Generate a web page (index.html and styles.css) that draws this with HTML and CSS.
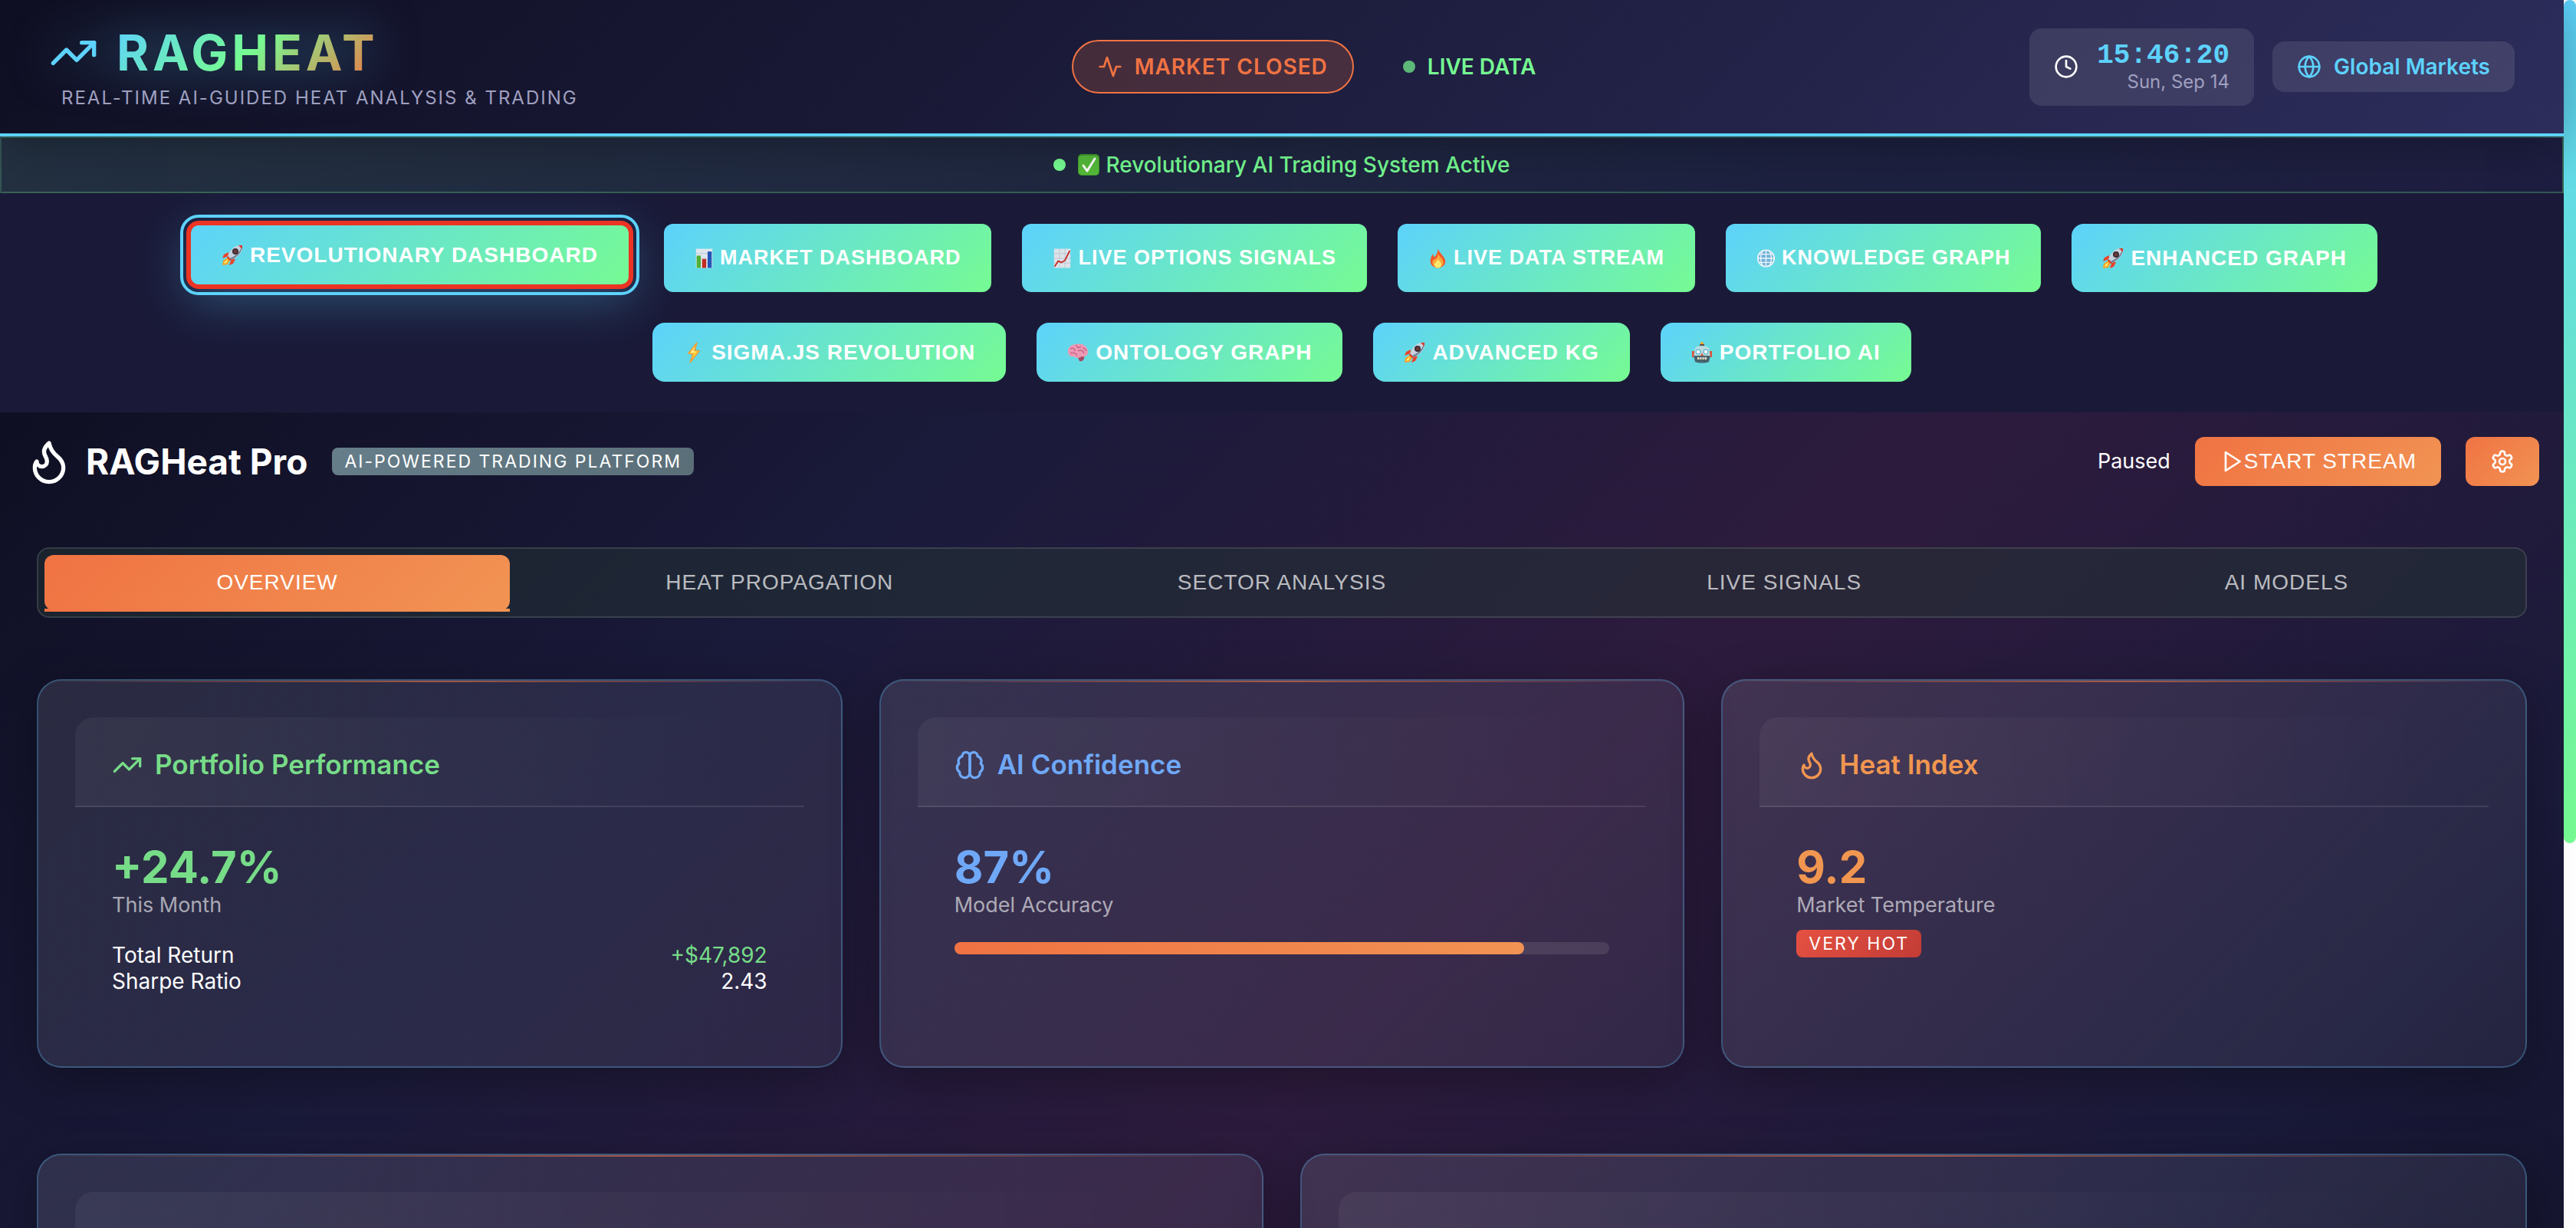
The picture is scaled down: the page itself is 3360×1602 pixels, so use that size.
FILE: index.html
```html
<!DOCTYPE html>
<html lang="en">
<head>
<meta charset="utf-8">
<title>RAGHeat Pro</title>
<link rel="stylesheet" href="styles.css">
</head>
<body>
<svg class="sprite" aria-hidden="true">
  <symbol id="trend" viewBox="0 0 24 24"><path d="M22 7 13.5 15.500 8.500 10.500 2 17"/><path d="M16 7h6v6"/></symbol>
  <symbol id="flame" viewBox="0 0 24 24"><path d="M8.500 14.500A2.500 2.500 0 0 0 11 12c0-1.380-.5-2-1-3-1.072-2.143-.224-4.054 2-6 .5 2.500 2 4.900 4 6.500 2 1.600 3 3.500 3 5.500a7 7 0 1 1-14 0c0-1.153.433-2.294 1-3a2.500 2.500 0 0 0 2.500 2.500z"/></symbol>
  <symbol id="rocket" viewBox="0 0 28 28">
    <path fill="#e8452c" d="M9 10 3 13 1 18 9 15zM18 19 15 25 10 27 13 18z"/>
    <path fill="#f7a325" d="M8 17 2 21 1 27 8 26 11 20z"/><path fill="#ffe36b" d="M8 19 4 22 3 25 7 24z"/>
    <path fill="#c7d0dc" d="M27 1C19 0 12 5 8 15L13 20C23 16 28 9 27 1z"/>
    <path fill="#6f7f93" d="M27 1C27 9 22 15 13 20L11 18C20 14 25 8 27 1z"/>
    <path fill="#d8382a" d="M27 1 22 1 27 6z"/>
    <circle cx="18" cy="9" r="4" fill="#3a2d33"/><circle cx="18" cy="9" r="2" fill="#7b3b3b"/>
    <path fill="#d8382a" d="M8 15 13 20 11 21 7 17z"/>
  </symbol>
  <symbol id="bars" viewBox="0 0 28 28">
    <path fill="#dfe6ee" d="M2 0H26V28H2z"/><path stroke="#b9c6d4" d="M2 7H26M2 14H26M2 21H26"/>
    <path fill="#4fb034" d="M3 10H9V28H3z"/><path fill="#c22a20" d="M11 15H17V28H11z"/><path fill="#2456b8" d="M19 4H25V28H19z"/>
  </symbol>
  <symbol id="chart" viewBox="0 0 28 28">
    <path fill="#dde2e9" d="M2 0H26V28H2z"/><path stroke="#bcc5d0" d="M2 7H26M2 14H26M2 21H26M10 0V28M18 0V28"/>
    <path fill="none" stroke="#c4261d" stroke-width="2" d="M3 26 8 18 13 20 18 17 25 3"/>
  </symbol>
  <symbol id="fire" viewBox="0 0 28 28">
    <path fill="#f2592a" d="M14 0C16 6 24 11 25 18 25 24 20 28 14 28S3 24 3 18C3 14 5 10 7 7 7 10 8 12 9 12 12 9 14 5 14 0z"/>
    <path fill="#fba63a" d="M14 7C16 12 22 14 22 20 22 25 18 28 14 28S6 25 6 20C6 17 8 15 10 15 13 14 14 11 14 7z"/>
    <path fill="#ffe96a" d="M14 15C16 18 19 19 19 23 19 26 17 28 14 28S9 26 9 23C9 20 13 19 14 15z"/>
  </symbol>
  <symbol id="mesh" viewBox="0 0 28 28">
    <circle cx="14" cy="14" r="12" fill="#71b3d8" stroke="#e8f2f8" stroke-width="2"/>
    <path fill="none" stroke="#eef5fa" stroke-width="1.500" d="M2 14H26M14 2V26M4 8H24M4 20H24M10 2C5 9 5 19 10 26M18 2C23 9 23 19 18 26"/>
  </symbol>
  <symbol id="bolt" viewBox="0 0 28 28">
    <path fill="#ffd23b" stroke="#f09b35" stroke-width="1.500" d="M18 1 7 15 13 16 9 27 21 12 15 11z"/><path fill="#fff3a0" d="M15 6 10 14 14 14 17 13 13 12z"/>
  </symbol>
  <symbol id="pinkbrain" viewBox="0 0 28 28">
    <path fill="#a04a66" d="M13 18H22C23 23 20 26 16 25z"/>
    <path fill="#ee9ab4" d="M1 13C0 8 5 3 12 3 20 1 27 6 27 13 27 18 23 20 19 19 15 22 10 21 9 19 4 20 1 17 1 13z"/>
    <path fill="none" stroke="#c4668a" stroke-width="1.500" d="M4 9C8 7 10 9 10 12M12 4C12 8 16 8 18 6M14 12C17 10 21 11 22 15M4 15C8 13 12 15 13 18M20 8C23 8 24 10 25 12"/>
  </symbol>
  <symbol id="robot" viewBox="0 0 28 28">
    <circle cx="14" cy="2" r="2" fill="#f5a623"/><path fill="#5b4b50" d="M11 3H17V7H11z"/>
    <path fill="#d8543c" d="M1 12H4V20H1zM24 12H27V20H24z"/>
    <path fill="#b8dbe0" d="M5 8C8 4 20 4 23 8L25 20H3z"/><path fill="#48636c" d="M3 18H25L23 26C18 28 10 28 5 26z"/>
    <circle cx="9" cy="13" r="3" fill="#fff" stroke="#37a4c4"/><circle cx="19" cy="13" r="3" fill="#fff" stroke="#37a4c4"/>
    <path fill="#e2573d" d="M14 14 16 18H12z"/><path fill="#f0e2c8" d="M8 20H20V23H8z"/><path stroke="#48636c" d="M11 20V23M14 20V23M17 20V23"/>
  </symbol>
</svg>

<div class="window">
<div class="page">
  <header class="top">
    <div class="brand">
      <h1 class="logo"><svg class="line i64"><use href="#trend"/></svg><span>RAGHEAT</span></h1>
      <p class="tagline">REAL-TIME AI-GUIDED HEAT ANALYSIS &amp; TRADING</p>
    </div>
    <div class="feed">
      <span class="pill"><svg class="line i32" viewBox="0 0 24 24"><path d="M22 12h-4l-3 9L9 3l-3 9H2"/></svg>MARKET CLOSED</span>
      <span class="live"><i class="dot dim"></i>LIVE DATA</span>
    </div>
    <div class="meta">
      <div class="chip">
        <svg class="line i32" viewBox="0 0 24 24"><circle cx="12" cy="12" r="10"/><path d="M12 6v6l4 2"/></svg>
        <div class="clock"><time>15:46:20</time><small>Sun, Sep 14</small></div>
      </div>
      <div class="chip markets"><svg class="line i32" viewBox="0 0 24 24"><circle cx="12" cy="12" r="10"/><path d="M12 2a14.500 14.500 0 0 0 0 20 14.500 14.500 0 0 0 0-20M2 12h20"/></svg>Global Markets</div>
    </div>
  </header>

  <div class="status"><i class="dot"></i><span class="msg"><svg class="check" viewBox="0 0 28 28"><rect width="28" height="28" rx="5" fill="#3f9a2c"/><rect x="1" y="2" width="26" height="25" rx="4" fill="#55bb3a"/><path d="M7 15 12 22 22 6" fill="none" stroke="#fff" stroke-width="3" stroke-linecap="round" stroke-linejoin="round"/></svg>Revolutionary AI Trading System Active</span></div>

  <nav class="views">
    <button class="view active"><svg><use href="#rocket"/></svg>REVOLUTIONARY DASHBOARD</button>
    <button class="view plain"><svg><use href="#bars"/></svg>MARKET DASHBOARD</button>
    <button class="view plain"><svg><use href="#chart"/></svg>LIVE OPTIONS SIGNALS</button>
    <button class="view plain"><svg><use href="#fire"/></svg>LIVE DATA STREAM</button>
    <button class="view plain"><svg><use href="#mesh"/></svg>KNOWLEDGE GRAPH</button>
    <button class="view"><svg><use href="#rocket"/></svg>ENHANCED GRAPH</button>
    <button class="view"><svg><use href="#bolt"/></svg>SIGMA.JS REVOLUTION</button>
    <button class="view"><svg><use href="#pinkbrain"/></svg>ONTOLOGY GRAPH</button>
    <button class="view"><svg><use href="#rocket"/></svg>ADVANCED KG</button>
    <button class="view"><svg><use href="#robot"/></svg>PORTFOLIO AI</button>
  </nav>

  <main class="main">
    <div class="bar">
      <svg class="line i64"><use href="#flame"/></svg>
      <h2 class="name">RAGHeat Pro</h2>
      <span class="badge">AI-POWERED TRADING PLATFORM</span>
      <span class="paused">Paused</span>
      <button class="action"><svg class="line i32" viewBox="0 0 24 24"><path d="M6 3 20 12 6 21z"/></svg>START STREAM</button>
      <button class="action" aria-label="Settings"><svg class="line i32" viewBox="0 0 24 24"><path d="M12.220 2h-.44a2 2 0 0 0-2 2v.18a2 2 0 0 1-1 1.730l-.43.25a2 2 0 0 1-2 0l-.15-.08a2 2 0 0 0-2.730.73l-.22.38a2 2 0 0 0 .73 2.730l.15.1a2 2 0 0 1 1 1.720v.51a2 2 0 0 1-1 1.740l-.15.09a2 2 0 0 0-.73 2.730l.22.38a2 2 0 0 0 2.730.73l.15-.08a2 2 0 0 1 2 0l.43.25a2 2 0 0 1 1 1.730V20a2 2 0 0 0 2 2h.44a2 2 0 0 0 2-2v-.18a2 2 0 0 1 1-1.730l.43-.25a2 2 0 0 1 2 0l.15.08a2 2 0 0 0 2.730-.73l.22-.39a2 2 0 0 0-.73-2.730l-.15-.08a2 2 0 0 1-1-1.740v-.5a2 2 0 0 1 1-1.740l.15-.09a2 2 0 0 0 .73-2.730l-.22-.38a2 2 0 0 0-2.730-.73l-.15.08a2 2 0 0 1-2 0l-.43-.25a2 2 0 0 1-1-1.730V4a2 2 0 0 0-2-2z"/><circle cx="12" cy="12" r="3"/></svg></button>
    </div>

    <div class="tabs" role="tablist">
      <button class="tab on" role="tab" aria-selected="true">OVERVIEW</button>
      <button class="tab" role="tab">HEAT PROPAGATION</button>
      <button class="tab" role="tab">SECTOR ANALYSIS</button>
      <button class="tab" role="tab">LIVE SIGNALS</button>
      <button class="tab" role="tab">AI MODELS</button>
    </div>

    <div class="cards three">
      <section class="card green">
        <h3 class="head"><svg class="line i40"><use href="#trend"/></svg>Portfolio Performance</h3>
        <div class="body">
          <div class="value">+24.7%</div>
          <div class="label">This Month</div>
          <dl class="facts">
            <div><dt>Total Return</dt><dd class="gain">+$47,892</dd></div>
            <div><dt>Sharpe Ratio</dt><dd>2.43</dd></div>
          </dl>
        </div>
      </section>
      <section class="card blue">
        <h3 class="head"><svg class="line i40" viewBox="0 0 24 24"><path d="M12 5a3 3 0 1 0-5.997.125 4 4 0 0 0-2.526 5.770 4 4 0 0 0 .556 6.588A4 4 0 1 0 12 18Z"/><path d="M12 5a3 3 0 1 1 5.997.125 4 4 0 0 1 2.526 5.770 4 4 0 0 1-.556 6.588A4 4 0 1 1 12 18Z"/></svg>AI Confidence</h3>
        <div class="body">
          <div class="value">87%</div>
          <div class="label">Model Accuracy</div>
          <div class="meter"><div class="fill" style="width:87%"></div></div>
        </div>
      </section>
      <section class="card orange">
        <h3 class="head"><svg class="line i40"><use href="#flame"/></svg>Heat Index</h3>
        <div class="body">
          <div class="value">9.2</div>
          <div class="label">Market Temperature</div>
          <span class="badge hot">VERY HOT</span>
        </div>
      </section>
    </div>

    <div class="cards two">
      <section class="card tall"><div class="head"></div></section>
      <section class="card tall"><div class="head"></div></section>
    </div>
  </main>
</div>
<div class="scroll" aria-hidden="true"><div class="thumb"></div></div>
</div>
</body>
</html>
```
FILE: styles.css
```css
* { box-sizing: border-box; margin: 0; padding: 0; }
body { background: #1a1a38; color: #fff; font-family: Inter, "Noto Sans", sans-serif; font-size: 28px; line-height: 34px; }
button { border: 0; color: #fff; font-family: "Liberation Sans", Arial, sans-serif; font-size: 28px; letter-spacing: 1px; }
.sprite { display: none; }
.line { flex: none; fill: none; stroke: currentColor; stroke-width: 2; stroke-linecap: round; stroke-linejoin: round; }
.i64 { width: 64px; height: 64px; }
.i40 { width: 40px; height: 40px; }
.i32 { width: 32px; height: 32px; }

.window { display: flex; height: 100vh; overflow: hidden; }
.page { flex: 1; min-width: 0; }
.scroll { width: 16px; background: #fff; }
.thumb { height: 1100px; border-radius: 8px; background: linear-gradient(#5dd2fc, #76fb92); }

.top { position: relative; display: flex; justify-content: space-between; align-items: center; padding: 32px 64px; border-bottom: 4px solid #5dd2fc; background: linear-gradient(135deg, #0f0f23, #1a1a38 40%, #2d2d5c); box-shadow: 0 8px 64px rgba(0, 0, 0, .3); }
.logo { display: flex; align-items: center; gap: 24px; height: 74px; color: #5dd2fc; font-size: 64px; font-weight: 700; letter-spacing: 5px; filter: drop-shadow(0 0 32px rgba(93, 210, 252, .5)); }
.logo span { line-height: 74px; background: linear-gradient(135deg, #5dd2fc, #76fb92 50%, #f07343); -webkit-background-clip: text; background-clip: text; color: transparent; }
.tagline { margin: 8px 0 0 16px; color: #a0a0c0; font-size: 24px; line-height: 28px; letter-spacing: 2px; }
.feed, .meta, .pill, .live, .chip { display: flex; align-items: center; }
.feed { gap: 64px; font-weight: 600; }
.pill { gap: 16px; padding: 16px 32px; border: 2px solid #f07343; border-radius: 40px; background: rgba(240, 115, 67, .2); color: #f07343; letter-spacing: 1px; }
.live { gap: 16px; color: #76fb92; }
.dot { width: 16px; height: 16px; border-radius: 50%; background: #76fb92; }
.dim { opacity: .7; }
.meta { gap: 24px; }
.chip { gap: 24px; padding: 16px 32px; border-radius: 16px; background: rgba(255, 255, 255, .1); }
.clock { display: flex; flex-direction: column; align-items: flex-end; }
.clock time { color: #5dd2fc; font-family: "Liberation Mono", "Courier New", monospace; font-size: 36px; font-weight: 700; line-height: 39px; }
.clock small { color: #a0a0c0; font-size: 24px; line-height: 30px; }
.markets { gap: 16px; color: #5dd2fc; font-weight: 600; }

.status { display: flex; justify-content: center; align-items: center; gap: 16px; padding: 16px; border: 2px solid rgba(118, 251, 146, .25); background: linear-gradient(90deg, rgba(118, 251, 146, .1), rgba(93, 210, 252, .04) 70%, rgba(93, 93, 210, .06)); color: #76fb92; font-weight: 500; line-height: 38px; }
.msg { display: flex; align-items: center; gap: 8px; }
.check { width: 28px; height: 28px; }

.views { display: flex; flex-wrap: wrap; justify-content: center; gap: 40px; padding: 40px 64px; }
.view { display: flex; justify-content: center; align-items: center; gap: 9px; padding: 24px 40px; border-radius: 16px; background: linear-gradient(135deg, #5dd2fc, #76fb92); font-weight: 700; line-height: 29px; }
.view svg { width: 28px; height: 28px; }
.plain { gap: 8px; border-radius: 12px; font-size: 27px; }
.plain svg { width: 25px; }
.active { position: relative; top: -4px; border: 6px solid #eb3423; background-origin: border-box; outline: 4px solid #5dd2fc; outline-offset: 4px; box-shadow: 0 16px 64px rgba(93, 210, 252, .3); }

.main { padding: 32px 48px 128px; background: linear-gradient(135deg, #0f0f23, #1a1a3a 25%, #2d1b3d 50%, #1a1a3a 75%, #0f0f23); }
.bar { display: flex; align-items: center; margin: 0 -16px; }
.name { margin: 0 32px 0 16px; font-size: 46px; font-weight: 700; line-height: 64px; }
.badge { padding: 0 16px; border-radius: 8px; background: linear-gradient(135deg, #667e8a, #5a6e78); font-size: 23px; font-weight: 400; line-height: 36px; letter-spacing: 2px; }
.paused { margin-left: auto; font-size: 27px; }
.action { display: flex; align-items: center; height: 64px; margin-left: 32px; padding: 0 32px; border-radius: 12px; background: linear-gradient(135deg, #f07343, #f19353); }

.tabs { display: grid; grid-template-columns: repeat(5, 1fr); gap: 48px; margin-top: 80px; padding: 8px; border: 2px solid rgba(255, 255, 255, .12); border-radius: 16px; background: rgba(36, 52, 52, .5); }
.tab { position: relative; height: 72px; border-radius: 12px; background: none; color: rgba(255, 255, 255, .7); }
.on { background: linear-gradient(135deg, #f07343, #f19353); color: #fff; }
.on::after { content: ""; position: absolute; left: 0; right: 0; bottom: -2px; height: 4px; background: linear-gradient(90deg, #f07343, #f19353); }

.cards { display: grid; gap: 48px; margin-top: 80px; }
.three { grid-template-columns: repeat(3, 1fr); }
.two { grid-template-columns: repeat(2, 1fr); margin-top: 112px; }
.card { position: relative; padding: 48px; border: 2px solid rgba(93, 190, 240, .3); border-radius: 32px; background: linear-gradient(135deg, rgba(240, 245, 255, .11), rgba(240, 245, 255, .06)); box-shadow: 0 16px 64px rgba(0, 0, 0, .3); overflow: hidden; }
.card::before { content: ""; position: absolute; left: 0; right: 0; top: 0; height: 2px; background: linear-gradient(90deg, transparent, #f07343, transparent); opacity: .6; }
.tall { min-height: 700px; }
.head { display: flex; align-items: center; gap: 16px; min-height: 117px; padding: 40px 48px 32px; border-bottom: 2px solid rgba(255, 255, 255, .1); border-radius: 24px 24px 0 0; background: linear-gradient(90deg, rgba(255, 255, 255, .05), transparent); font-size: 35px; font-weight: 600; line-height: 43px; }
.body { padding: 48px 48px 46px; }
.value { font-size: 58px; font-weight: 700; line-height: 60px; }
.label { color: rgba(255, 255, 255, .6); font-size: 27px; line-height: 40px; }
.green .head, .green .value, .gain { color: #77dc88; }
.blue .head, .blue .value { color: #6fa8f7; }
.orange .head, .orange .value { color: #f19650; }
.facts { margin-top: 28px; }
.facts div { display: flex; justify-content: space-between; }
.meter { height: 16px; margin-top: 28px; border-radius: 8px; background: rgba(255, 255, 255, .1); }
.fill { height: 100%; border-radius: 8px; background: linear-gradient(90deg, #f07343, #f19353); }
.hot { display: inline-block; margin-top: 12px; background: linear-gradient(135deg, #e55142, #c23c35); }
```
